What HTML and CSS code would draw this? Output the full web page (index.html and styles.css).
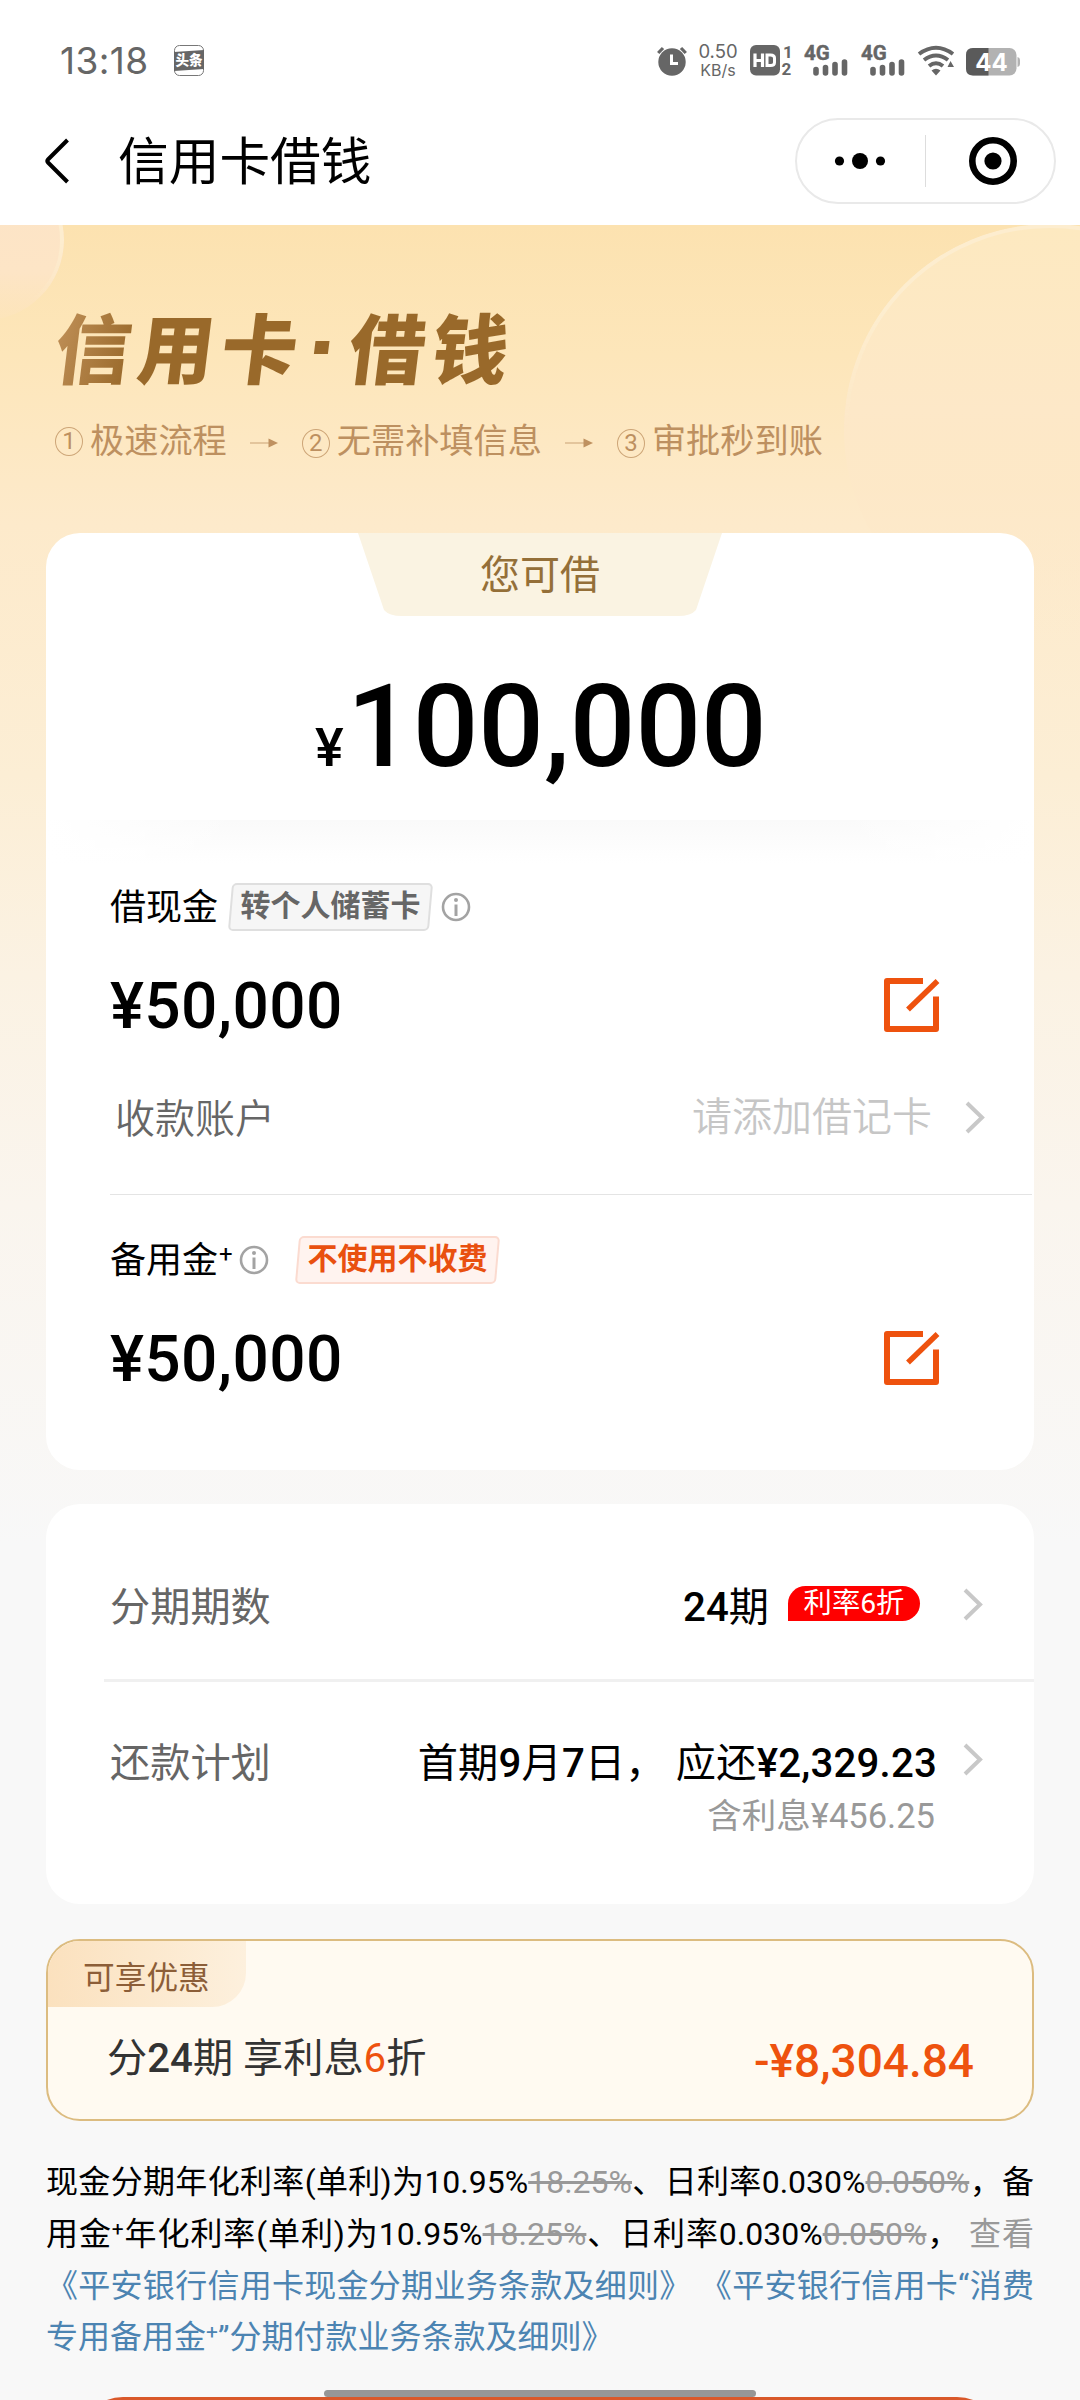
FILE: index.html
```html
<!DOCTYPE html>
<html lang="zh-CN">
<head>
<meta charset="utf-8">
<title>信用卡借钱</title>
<link rel="stylesheet" href="styles.css">
</head>
<body>
<div class="app">
  <div class="status">
    <span class="clock">13:18</span>
    <svg class="news" width="30" height="31" viewBox="0 0 30 31"><rect x=".5" y=".5" width="29" height="30" rx="5" fill="#fff" stroke="#777"/><path d="M0 7 30 5V24L0 26Z" fill="#666"/><text x="15" y="20" text-anchor="middle" class="news-text">头条</text></svg>
    <div class="status-right">
      <svg class="alarm" width="30" height="31" viewBox="0 0 30 31"><circle cx="15" cy="17" r="13.7" fill="#666"/><path d="M1.2 8 6 3M28.800 8 24 3" stroke="#666" stroke-width="3.200"/><path d="M14.500 9.500V18.500H21" fill="none" stroke="#fff" stroke-width="3"/></svg>
      <div class="speed"><span>0.50</span><span class="unit">KB/s</span></div>
      <svg class="hd" width="43" height="31" viewBox="0 0 43 31"><rect width="30" height="30.500" rx="6" fill="#666"/><path d="M5 8.500V22M12.500 8.500V22M5 15.500H12.500" stroke="#fff" stroke-width="3.200" fill="none"/><path d="M17 10H20.500Q24.500 10 24.500 13V17.500Q24.500 20.500 20.500 20.500H17Z" fill="none" stroke="#fff" stroke-width="3"/><text x="33" y="12.500" class="sim">1</text><text x="31.500" y="30" class="sim">2</text></svg>
      <svg class="signal" width="45" height="31" viewBox="0 0 45 31"><text x="0" y="15" class="net">4G</text><path d="M12 24.500V28M21.500 22.500V28M31 19.500V28M40.500 17V28" stroke="#666" stroke-width="5.600" stroke-linecap="round"/></svg>
      <svg class="signal second" width="45" height="31" viewBox="0 0 45 31"><text x="0" y="15" class="net">4G</text><path d="M12 24.500V28M21.500 22.500V28M31 19.500V28M40.500 17V28" stroke="#666" stroke-width="5.600" stroke-linecap="round"/></svg>
      <svg class="wifi" width="37" height="31" viewBox="0 0 37 31"><path d="M1 9Q18 -3.500 35 9M6 15Q18 6 30 15M11 21Q18 15.500 25 21" fill="none" stroke="#666" stroke-width="4"/><path d="M13.500 25.500Q18 22 22.500 25.500L18 30.500ZM32.500 16 36 22H29.500Z" fill="#666"/></svg>
      <svg class="battery" width="54" height="28" viewBox="0 0 54 28"><rect width="50.500" height="27.500" rx="7" fill="#b2b2b2"/><path d="M22.500 0H7Q0 0 0 7V20.500Q0 27.500 7 27.500H22.500Z" fill="#5a5a5a"/><path d="M51.500 9Q54 9.500 54 12V16Q54 18.500 51.500 19Z" fill="#b2b2b2"/><text x="25.500" y="22.500" text-anchor="middle" class="charge">44</text></svg>
    </div>
  </div>
  <header class="nav">
    <svg class="back" width="26" height="46" viewBox="0 0 26 46"><path d="M22.500 2 3 21.500Q1.500 23 3 24.500L22.500 44" fill="none" stroke="#000" stroke-width="4"/></svg>
    <h1>信用卡借钱</h1>
    <div class="capsule">
      <svg width="52" height="20" viewBox="0 0 52 20"><circle cx="5.500" cy="10" r="4.600"/><circle cx="26" cy="10" r="8"/><circle cx="46.500" cy="10" r="4.600"/></svg>
      <i></i>
      <svg width="48" height="48" viewBox="0 0 48 48"><circle cx="24" cy="24" r="20.700" fill="none" stroke="#000" stroke-width="6.600"/><circle cx="24" cy="24" r="8.600"/></svg>
    </div>
  </header>

  <main class="page">
    <div class="bubble bubble-left"></div>
    <div class="bubble bubble-right"></div>
    <section class="hero">
      <h2><span>信</span><span>用</span><span>卡</span><i></i><span>借</span><span>钱</span></h2>
      <div class="steps">
        <b>1</b><span>极速流程</span>
        <svg width="28" height="10" viewBox="0 0 28 10"><path d="M0 5H20" stroke="#e3c59c" stroke-width="2"/><path d="M18.500 .5 28 5 18.500 9.500Z" fill="#bf9160"/></svg>
        <b class="low">2</b><span>无需补填信息</span>
        <svg width="28" height="10" viewBox="0 0 28 10"><path d="M0 5H20" stroke="#e3c59c" stroke-width="2"/><path d="M18.500 .5 28 5 18.500 9.500Z" fill="#bf9160"/></svg>
        <b class="low">3</b><span>审批秒到账</span>
      </div>
    </section>

    <section class="card loan">
      <div class="total">
        <div class="tab">
          <svg width="364" height="83" viewBox="0 0 364 83"><path d="M0 0H364L338 77Q333 83 320 83H44Q31 83 26 77Z" fill="#faf3e2"/></svg>
          <span>您可借</span>
        </div>
        <div class="sum"><small>¥</small><span>100,000</span></div>
      </div>
      <div class="product cash">
        <div class="name"><span>借现金</span>
          <span class="tag gray">转个人储蓄卡</span>
          <svg class="info" width="30" height="30" viewBox="0 0 30 30"><circle cx="15" cy="15" r="13" fill="none" stroke="#a3a3a3" stroke-width="2.600"/><path d="M15 12.500V24" stroke="#a3a3a3" stroke-width="3"/><circle cx="15" cy="8" r="2" fill="#a3a3a3"/></svg>
        </div>
        <div class="amount"><span>¥50,000</span><svg width="56" height="55" viewBox="0 0 56 55"><path d="M39 3H3V51H52V18.500" fill="none" stroke="#ee520e" stroke-width="6" stroke-linejoin="round"/><path d="M24 31.500 53.500 3" stroke="#ee520e" stroke-width="5.500"/></svg></div>
        <div class="account"><span>收款账户</span><em>请添加借记卡</em><svg class="chevron" width="20" height="33" viewBox="0 0 20 33"><path d="M2 2 17 16.500 2 31" fill="none" stroke="#c8c8c8" stroke-width="4"/></svg></div>
        <hr>
      </div>
      <div class="product reserve">
        <div class="name"><span>备用金</span><sup>+</sup>
          <svg class="info" width="30" height="30" viewBox="0 0 30 30"><circle cx="15" cy="15" r="13" fill="none" stroke="#a3a3a3" stroke-width="2.600"/><path d="M15 12.500V24" stroke="#a3a3a3" stroke-width="3"/><circle cx="15" cy="8" r="2" fill="#a3a3a3"/></svg>
          <span class="tag orange">不使用不收费</span>
        </div>
        <div class="amount"><span>¥50,000</span><svg width="56" height="55" viewBox="0 0 56 55"><path d="M39 3H3V51H52V18.500" fill="none" stroke="#ee520e" stroke-width="6" stroke-linejoin="round"/><path d="M24 31.500 53.500 3" stroke="#ee520e" stroke-width="5.500"/></svg></div>
      </div>
    </section>

    <section class="card plan">
      <div class="plan-row term">
        <span class="label">分期期数</span>
        <span class="value"><b>24</b>期</span><span class="badge">利率6折</span>
        <svg class="chevron" width="20" height="33" viewBox="0 0 20 33"><path d="M2 2 17 16.500 2 31" fill="none" stroke="#c8c8c8" stroke-width="4"/></svg>
      </div>
      <div class="plan-row repay">
        <span class="label">还款计划</span>
        <span class="value">首期<b>9</b>月<b>7</b>日， 应还<b>¥2,329.23</b></span>
        <svg class="chevron" width="20" height="33" viewBox="0 0 20 33"><path d="M2 2 17 16.500 2 31" fill="none" stroke="#c8c8c8" stroke-width="4"/></svg>
      </div>
      <div class="interest">含利息¥456.25</div>
    </section>

    <section class="offer">
      <span class="offer-label">可享优惠</span>
      <div class="offer-row"><span>分<b>24</b>期 享利息<em>6</em>折</span><strong>-¥8,304.84</strong></div>
    </section>

    <section class="terms">
      <p>现金分期年化利率(单利)为10.95%<s>18.25%</s>、日利率0.030%<s>0.050%</s>，备</p>
      <p>用金<sup>+</sup>年化利率(单利)为10.95%<s>18.25%</s>、日利率0.030%<s>0.050%</s>， <span class="view">查看</span></p>
      <p class="link">《平安银行信用卡现金分期业务条款及细则》 《平安银行信用卡“消费</p>
      <p class="link last">专用备用金<sup>+</sup>”分期付款业务条款及细则》</p>
    </section>
    <div class="submit"></div>
    <div class="home"></div>
  </main>
</div>
</body>
</html>
```

FILE: styles.css
```css
* { box-sizing: border-box; }
body {
  margin: 0;
  background: #fff;
  color: #000;
  font-family: Roboto, "Noto Sans CJK SC", sans-serif;
  text-spacing-trim: space-all;
}
h1, h2, p { margin: 0; font-weight: 400; }
i, em { font-style: normal; }
svg { display: block; flex: none; overflow: visible; }
span { white-space: nowrap; }
.app { width: 1080px; height: 2400px; overflow: hidden; display: flex; flex-direction: column; }

/* status bar */
.status { height: 100px; flex: none; display: flex; align-items: flex-start; padding: 45px 60px 0 60px; color: #666; }
.clock { font: 400 37px/31px Inter, sans-serif; width: 114px; letter-spacing: 0.4px; }
.news-text { font: 900 13.500px "Noto Sans CJK SC", sans-serif; fill: #fff; }
.status-right { margin-left: auto; display: flex; }
.speed { width: 40px; margin: -4px 12px 0 11px; font: 400 18.500px/20px Inter, sans-serif; display: flex; flex-direction: column; align-items: center; }
.unit { font-size: 16px; line-height: 18px; }
.sim { font: 700 17px Roboto, sans-serif; fill: #666; }
.net { font: 700 20.500px Roboto, sans-serif; fill: #666; stroke: #666; stroke-width: .4px; }
.signal { margin-left: 11px; }
.signal.second { margin-left: 12px; }
.wifi { margin-left: 12px; }
.battery { margin: 3px 0 0 11px; }
.charge { font: 700 24px Inter, sans-serif; fill: #fff; }

/* navigation */
.nav { height: 125px; flex: none; display: flex; align-items: center; padding: 0 24px 3px 45px; }
.nav h1 { font-size: 50.700px; line-height: 60px; margin: 4px 0 0 47px; }
.capsule { margin-left: auto; width: 261px; height: 86px; border: 2px solid #e9e9e9; border-radius: 43px; display: flex; align-items: center; padding-left: 37px; }
.capsule i { width: 1px; height: 52px; background: #ddd; margin: 0 43px 0 39px; }

/* page body */
.page {
  position: relative; flex: 1; overflow: hidden; padding: 0 46px;
  background: linear-gradient(180deg, #fce2b0 0, #fde6ba 130px, #fdeacb 300px, #fceed5 550px, #fbf2e3 750px, #faf5ee 980px, #f8f8f8 1320px);
}
.bubble { position: absolute; border-radius: 50%; }
.bubble-left { left: -96px; top: -65px; width: 160px; height: 160px; background: linear-gradient(180deg, #fce3c6, #fde5c6 70%, rgba(253, 229, 198, .2)); }
.bubble-right {
  left: 844px; top: -1px; width: 412px; height: 412px;
  background: linear-gradient(180deg, #fde9c0, #fde8c8 45%, rgba(253, 232, 200, 0) 100%);
}
.bubble::before {
  content: ""; position: absolute; inset: 0; border-radius: 50%; border: 4px solid #fdedcf;
  -webkit-mask-image: linear-gradient(180deg, #000 20%, transparent 50%);
  mask-image: linear-gradient(180deg, #000 20%, transparent 50%);
}
.bubble-left::before {
  -webkit-mask-image: linear-gradient(180deg, #000 50%, transparent 90%);
  mask-image: linear-gradient(180deg, #000 50%, transparent 90%);
}
.hero { position: relative; height: 308px; padding: 71px 0 0 10px; }
.hero h2 {
  display: flex; align-items: center; height: 98px; width: 470px;
  font: 900 76px/98px "Noto Sans CJK SC", sans-serif;
  background: linear-gradient(100deg, #c09058 0, #99692a 90px, #99692a 100%);
  -webkit-background-clip: text; background-clip: text; color: transparent;
  transform: skewX(-7deg);
}
.hero h2 span { width: 83px; }
.hero h2 i { width: 14px; height: 13px; background: #99692a; margin: 4px 21px 0 10px; }
.steps { display: flex; align-items: center; height: 50px; margin: 22px 0 0 -1px; font-size: 34.200px; line-height: 50px; color: #bd9060; }
.steps b { width: 28px; height: 29px; border: 1.500px solid #cda577; border-radius: 50%; font: 400 24px/26px Roboto, sans-serif; text-align: center; margin-right: 7px; flex: none; }
.steps b.low { margin-top: 4px; }
.steps svg { margin: 3px 24px 0 23px; }

/* shared card */
.card { position: relative; background: #fff; border-radius: 34px; }
.chevron { margin-top: -2px; }

/* loan card */
.loan { height: 937px; }
.total { height: 287px; }
.tab { display: grid; justify-content: center; }
.tab > * { grid-area: 1 / 1; }
.tab span { font-size: 40px; line-height: 86px; color: #946f38; text-align: center; }
.sum { display: flex; align-items: baseline; margin: 39px 0 0 269px; font-weight: 500; line-height: 137px; height: 137px; }
.sum small { font-size: 54px; width: 32px; }
.sum span { font-size: 115.500px; }
.product { padding: 63px 0 0 64px; height: 376px; position: relative; }
.cash { background: linear-gradient(90deg, #fff, rgba(255, 255, 255, 0) 20%, rgba(255, 255, 255, 0) 80%, #fff), linear-gradient(180deg, #fafafa, #fff 44px); }
.product hr { margin: 46px 2px 0 0; border: 0; height: 1px; background: #e4e4e4; }
.name { display: flex; align-items: center; height: 48px; font-size: 36px; line-height: 50px; }
.name > span:first-child { padding-top: 2px; }
.tag { position: relative; z-index: 0; width: 205px; height: 48px; line-height: 44px; font-size: 30px; font-weight: 700; text-align: center; margin-left: 10px; padding-top: 1px; }
.tag::before { content: ""; position: absolute; inset: 0 2px; z-index: -1; border: 2px solid; border-radius: 5px; transform: skewX(-5deg); }
.gray { color: #666; }
.gray::before { background: #f6f6f6; border-color: #dfdfdf; }
.orange { color: #e9500f; margin-left: 26px; }
.orange::before { background: #fff3ef; border-color: #fbdbd0; }
.info { margin-left: 8px; }
.name sup { font-size: 24px; line-height: 20px; margin: -13px 0 0 1px; width: 12px; }
.amount { display: flex; justify-content: space-between; align-items: center; height: 60px; margin-top: 44px; padding-right: 94px; font-size: 64px; line-height: 60px; font-weight: 500; letter-spacing: .35px; }
.amount span { padding-top: 3px; }
.account { display: flex; align-items: center; height: 60px; margin-top: 53px; padding: 0 49px 0 5px; font-size: 40px; line-height: 60px; color: #666; }
.account > span { font-weight: 350; padding-top: 3px; }
.account em { margin: 0 33px 0 auto; color: #c6c6c6; font-weight: 350; }
.reserve { padding-top: 40px; height: 274px; }

/* repayment plan */
.plan { margin-top: 34px; height: 400px; padding: 0 51px 0 64px; }
.plan-row { display: flex; align-items: center; height: 60px; font-size: 40.200px; line-height: 60px; }
.plan-row > .label, .plan-row > .value { padding-top: 4px; }
.plan b, .offer b { font-weight: 500; }
.label { color: #666; margin-right: auto; }
.term { padding-top: 73px; height: 178px; padding-bottom: 45px; margin: 0 -51px 0 -6px; padding-left: 6px; padding-right: 51px; border-bottom: 3px solid #f0f0f0; }
.badge { width: 132px; height: 35px; margin: -4px 43px 0 19px; border-radius: 18px 18px 18px 0; background: #f00; color: #fff; font-size: 28.300px; line-height: 35px; text-align: center; }
.repay { margin-top: 50px; }
.repay .value { letter-spacing: .2px; }
.repay .chevron { margin-left: 26px; margin-top: -6px; }
.interest { margin: 2px 48px 0 0; text-align: right; font-size: 34.500px; line-height: 44px; color: #999; }

/* discount */
.offer { margin-top: 35px; height: 182px; border: 2px solid #dcbc80; border-radius: 34px; background: #fffaf1; overflow: hidden; }
.offer-label { display: block; width: 198px; height: 66px; padding-left: 35px; font-size: 31.700px; line-height: 75px; color: #8c5e38; background: linear-gradient(90deg, #fbe1be, #fdf0dd); border-radius: 0 0 34px 0; }
.offer-row { display: flex; align-items: center; justify-content: space-between; height: 60px; margin-top: 22px; padding: 0 58px 0 59px; font-size: 40.200px; line-height: 60px; color: #333; }
.offer em { color: #ee520e; }
.offer strong { font-size: 46px; font-weight: 500; color: #ee520e; padding-top: 4px; }

/* legal text */
.terms { padding-top: 35px; font-size: 32px; line-height: 52px; }
.terms p { height: 51.800px; text-align-last: justify; white-space: nowrap; }
.terms .last { text-align-last: left; }
.terms s, .view { color: #999; }
.terms sup { font-size: 21px; line-height: 0; vertical-align: 9px; }
.terms .link { color: #4c84b2; }

/* bottom edge */
.submit { position: absolute; left: 78px; right: 78px; top: 2172px; height: 90px; border-radius: 45px; background: #d9582a; }
.home { position: absolute; left: 324px; top: 2165px; width: 432px; height: 7px; border-radius: 4px; background: #969696; }
```
